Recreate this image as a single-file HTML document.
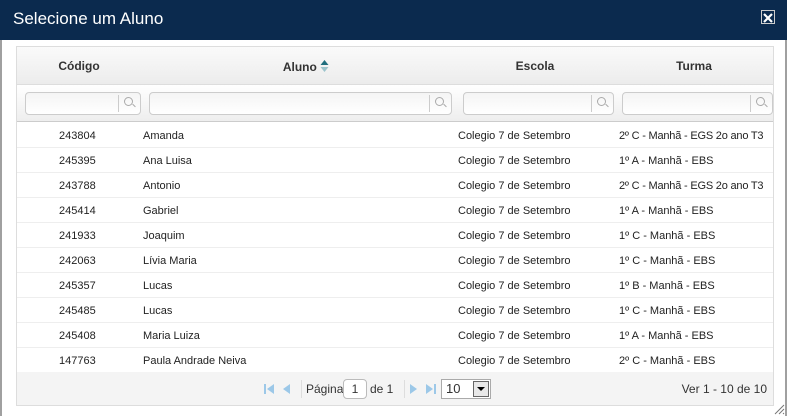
<!DOCTYPE html>
<html><head><meta charset="utf-8"><style>
*{box-sizing:border-box;margin:0;padding:0}
body{width:787px;height:416px;overflow:hidden;background:#fff;font-family:"Liberation Sans",sans-serif;color:#222;position:relative}
.outer{position:absolute;left:0;top:0;width:787px;height:416px;border-left:2px solid #a0a0a0;border-right:2px solid #a0a0a0}
.title{position:absolute;left:0;top:0;width:787px;height:40px;background:#0b2a4e;color:#fff;font-size:17px;line-height:38px;padding-left:13px}
.close{position:absolute;left:761px;top:10px;width:14px;height:14px;border:1px solid #ccc;background:#0b2a4e}
.grid{position:absolute;left:16px;top:46px;width:758px;height:360px;border:1px solid #ddd;background:#fff}
.hdr{position:absolute;left:0;top:0;width:756px;height:38px;background:linear-gradient(#fafafa,#ececec);border-bottom:1px solid #ddd;font-size:12px;font-weight:bold;color:#333}
.hdr div{position:absolute;top:12px;text-align:center}
.flt{position:absolute;left:0;top:38px;width:756px;height:37px;background:linear-gradient(#fff,#eee);border-bottom:1px solid #ccc}
.in{position:absolute;top:7px;height:23px;border:1px solid #ccc;border-radius:4px;background:linear-gradient(#f4f4f4,#fff)}
.in i{position:absolute;right:0;top:2px;width:22px;height:17px;border-left:1px solid #ccc}
.in i:before{content:"";position:absolute;left:5px;top:2px;width:7px;height:7px;border:1px solid #aaa;border-radius:50%}
.in i:after{content:"";position:absolute;left:13px;top:10px;width:4px;height:1px;background:#aaa;transform:rotate(45deg)}
.row{position:absolute;left:0;width:756px;height:25px;border-bottom:1px solid #eee;font-size:11px;line-height:26px}
.row span{position:absolute;top:0;white-space:nowrap}
.pg{position:absolute;left:0;top:325px;width:756px;height:33px;background:#f4f4f4;font-size:12px;color:#333}
</style></head><body>
<div class="outer"></div>
<div class="title">Selecione um Aluno</div>
<div class="close"><svg width="12" height="12" viewBox="0 0 12 12"><path d="M2 2L10 10M10 2L2 10" stroke="#fff" stroke-width="2.2"/></svg></div>
<div class="grid">
<div class="hdr">
<div style="left:0;width:124px">Código</div>
<div style="left:124px;width:330px">Aluno <svg width="9" height="14" viewBox="0 0 9 14" style="vertical-align:-2px"><path d="M4.5 1L8.5 6H0.5Z" fill="#1f6e7e"/><path d="M4.5 13L8.5 8H0.5Z" fill="#9cc4cc"/></svg></div>
<div style="left:438px;width:160px">Escola</div>
<div style="left:598px;width:158px">Turma</div>
</div>
<div class="flt">
<div class="in" style="left:8px;width:116px"><i></i></div>
<div class="in" style="left:132px;width:303px"><i></i></div>
<div class="in" style="left:446px;width:151px"><i></i></div>
<div class="in" style="left:605px;width:151px"><i></i></div>
</div>
<div class="row" style="top:76px"><span style="left:42px">243804</span><span style="left:126px">Amanda</span><span style="left:441px">Colegio 7 de Setembro</span><span style="left:602px;letter-spacing:-0.2px">2º C - Manhã - EGS 2o ano T3</span></div>
<div class="row" style="top:101px"><span style="left:42px">245395</span><span style="left:126px">Ana Luisa</span><span style="left:441px">Colegio 7 de Setembro</span><span style="left:602px">1º A - Manhã - EBS</span></div>
<div class="row" style="top:126px"><span style="left:42px">243788</span><span style="left:126px">Antonio</span><span style="left:441px">Colegio 7 de Setembro</span><span style="left:602px;letter-spacing:-0.2px">2º C - Manhã - EGS 2o ano T3</span></div>
<div class="row" style="top:151px"><span style="left:42px">245414</span><span style="left:126px">Gabriel</span><span style="left:441px">Colegio 7 de Setembro</span><span style="left:602px">1º A - Manhã - EBS</span></div>
<div class="row" style="top:176px"><span style="left:42px">241933</span><span style="left:126px">Joaquim</span><span style="left:441px">Colegio 7 de Setembro</span><span style="left:602px">1º C - Manhã - EBS</span></div>
<div class="row" style="top:201px"><span style="left:42px">242063</span><span style="left:126px">Lívia Maria</span><span style="left:441px">Colegio 7 de Setembro</span><span style="left:602px">1º C - Manhã - EBS</span></div>
<div class="row" style="top:226px"><span style="left:42px">245357</span><span style="left:126px">Lucas</span><span style="left:441px">Colegio 7 de Setembro</span><span style="left:602px">1º B - Manhã - EBS</span></div>
<div class="row" style="top:251px"><span style="left:42px">245485</span><span style="left:126px">Lucas</span><span style="left:441px">Colegio 7 de Setembro</span><span style="left:602px">1º C - Manhã - EBS</span></div>
<div class="row" style="top:276px"><span style="left:42px">245408</span><span style="left:126px">Maria Luiza</span><span style="left:441px">Colegio 7 de Setembro</span><span style="left:602px">1º A - Manhã - EBS</span></div>
<div class="row" style="top:301px;border-bottom:none"><span style="left:42px">147763</span><span style="left:126px">Paula Andrade Neiva</span><span style="left:441px">Colegio 7 de Setembro</span><span style="left:602px">2º C - Manhã - EBS</span></div>
<div class="pg">
<svg style="position:absolute;left:247px;top:11px" width="40" height="12" viewBox="0 0 40 12"><rect x="0" y="1" width="2" height="10" fill="#9cc8e8"/><path d="M10 1L3 6L10 11Z" fill="#9cc8e8"/><path d="M26 1L19 6L26 11Z" fill="#9cc8e8"/></svg>
<div style="position:absolute;left:284px;top:8px;width:1px;height:18px;background:#ddd"></div>
<span style="position:absolute;left:289px;top:10px">Página</span>
<div style="position:absolute;left:326px;top:7px;width:24px;height:20px;border:1px solid #bbb;border-radius:4px;background:#fff;text-align:center;line-height:18px">1</div>
<span style="position:absolute;left:353px;top:10px">de 1</span>
<div style="position:absolute;left:387px;top:8px;width:1px;height:18px;background:#ddd"></div>
<svg style="position:absolute;left:392px;top:11px" width="36" height="12" viewBox="0 0 36 12"><path d="M1 1L8 6L1 11Z" fill="#9cc8e8"/><path d="M17 1L24 6L17 11Z" fill="#9cc8e8"/><rect x="25" y="1" width="2" height="10" fill="#9cc8e8"/></svg>
<div style="position:absolute;left:424px;top:7px;width:50px;height:20px;border:1px solid #aaa;background:#fff;font-size:13px;line-height:18px;padding-left:4px">10<div style="position:absolute;right:1px;top:1px;width:16px;height:16px;border:1px solid #666;background:#e8e8e8"><svg width="14" height="14" viewBox="0 0 14 14"><path d="M3 5H11L7 9Z" fill="#000"/></svg></div></div>
<span style="position:absolute;right:6px;top:10px;font-size:12px">Ver 1 - 10 de 10</span>
</div>
</div>
<svg style="position:absolute;left:773px;top:403px" width="12" height="12" viewBox="0 0 12 12"><path d="M11 2L2 11M11 6L6 11M11 10L10 11" stroke="#777" stroke-width="1"/></svg>
</body></html>
